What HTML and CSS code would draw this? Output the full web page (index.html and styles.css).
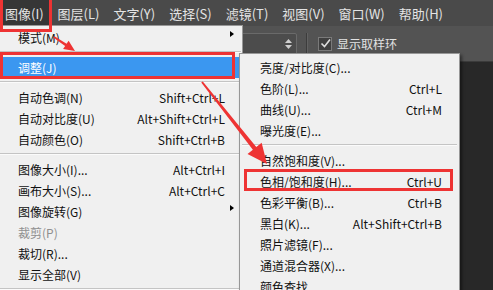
FILE: index.html
```html
<!DOCTYPE html>
<html lang="zh-CN">
<head>
<meta charset="utf-8">
<title>图像 - 调整</title>
<link rel="stylesheet" href="styles.css">
</head>
<body>
<div class="app">
  <nav class="menubar">
    <span class="mb-item active">图像(I)</span>
    <span class="mb-item">图层(L)</span>
    <span class="mb-item">文字(Y)</span>
    <span class="mb-item">选择(S)</span>
    <span class="mb-item">滤镜(T)</span>
    <span class="mb-item">视图(V)</span>
    <span class="mb-item">窗口(W)</span>
    <span class="mb-item">帮助(H)</span>
  </nav>
  <div class="options">
    <div class="select">
      <svg class="updown" width="7" height="10" viewBox="0 0 7 10"><path d="M3.5 0 L7 4 L0 4 Z M0 6 L7 6 L3.5 10 Z" fill="#cfcfcf"/></svg>
    </div>
    <div class="vsep"></div>
    <div class="check">
      <svg width="11" height="11" viewBox="0 0 11 11"><path d="M1.5 5.5 L4.5 8.5 L10 1.5" fill="none" stroke="#dedede" stroke-width="1.6"/></svg>
    </div>
    <span class="opt-label">显示取样环</span>
  </div>
  <div class="workspace"></div>

  <div class="menu main-menu">
    <div class="row">模式(M)<span class="arrow"></span></div>
    <div class="sep"></div>
    <div class="row hl boxed">调整(J)</div>
    <div class="sep"></div>
    <div class="row"><span>自动色调(N)</span><span>Shift+Ctrl+L</span></div>
    <div class="row"><span>自动对比度(U)</span><span>Alt+Shift+Ctrl+L</span></div>
    <div class="row"><span>自动颜色(O)</span><span>Shift+Ctrl+B</span></div>
    <div class="sep"></div>
    <div class="row"><span>图像大小(I)...</span><span>Alt+Ctrl+I</span></div>
    <div class="row"><span>画布大小(S)...</span><span>Alt+Ctrl+C</span></div>
    <div class="row">图像旋转(G)<span class="arrow"></span></div>
    <div class="row disabled">裁剪(P)</div>
    <div class="row">裁切(R)...</div>
    <div class="row">显示全部(V)</div>
    <div class="sep"></div>
  </div>

  <div class="menu sub-menu">
    <div class="row">亮度/对比度(C)...</div>
    <div class="row"><span>色阶(L)...</span><span>Ctrl+L</span></div>
    <div class="row"><span>曲线(U)...</span><span>Ctrl+M</span></div>
    <div class="row">曝光度(E)...</div>
    <div class="sep"></div>
    <div class="row">自然饱和度(V)...</div>
    <div class="row boxed2"><span>色相/饱和度(H)...</span><span>Ctrl+U</span></div>
    <div class="row"><span>色彩平衡(B)...</span><span>Ctrl+B</span></div>
    <div class="row"><span>黑白(K)...</span><span>Alt+Shift+Ctrl+B</span></div>
    <div class="row">照片滤镜(F)...</div>
    <div class="row">通道混合器(X)...</div>
    <div class="row">颜色查找...</div>
  </div>

  <svg class="annot" viewBox="0 0 493 290" width="493" height="290">
    <polygon fill="#ee3333" points="54.44,36.33 66.57,43.82 68.6,40.74 75,51 63.07,49.06 65.13,45.98 53.56,37.67"/>
    <polygon fill="#ee3333" points="202.78,81.38 256.3,146.96 261.64,142.73 267,164 247.52,153.91 252.86,149.69 201.22,82.62"/>
  </svg>
</div>
</body>
</html>
```

FILE: styles.css
```css
html, body {
  margin: 0;
  padding: 0;
}
body {
  width: 493px;
  height: 290px;
  overflow: hidden;
  background: #282828;
  font-family: "Noto Sans CJK SC", "Microsoft YaHei", sans-serif;
}
.app {
  position: relative;
  width: 493px;
  height: 290px;
  overflow: hidden;
  display: flex;
  flex-direction: column;
}

/* menu bar */
.menubar {
  height: 26px;
  flex: none;
  display: flex;
  background: #4a4a4a;
  color: #e4e4e4;
  font-size: 13px;
  line-height: 27px;
}
.mb-item {
  padding: 0 7px;
  white-space: nowrap;
}
.mb-item:first-child {
  padding-left: 5px;
}
.mb-item.active {
  position: relative;
  background: #363636;
}
.mb-item.active::after {
  content: "";
  position: absolute;
  left: 0;
  top: -3px;
  width: 52px;
  height: 35px;
  border: 3px solid #ee3333;
  box-sizing: border-box;
  z-index: 5;
}

/* options bar */
.options {
  height: 35px;
  flex: none;
  display: flex;
  align-items: center;
  background: #535353;
  border-bottom: 1px solid #3b3b3b;
}
.select {
  margin-left: 200px;
  width: 97px;
  height: 22px;
  box-sizing: border-box;
  border: 1px solid #6a6a6a;
  border-radius: 2px;
  background: #4c4c4c;
  display: flex;
  align-items: center;
  justify-content: flex-end;
  padding-right: 4px;
}
.vsep {
  margin-left: 9px;
  width: 1px;
  height: 22px;
  background: #3c3c3c;
  border-right: 1px solid #626262;
}
.check {
  margin-left: 10px;
  width: 14px;
  height: 14px;
  box-sizing: border-box;
  border: 1px solid #7a7a7a;
  background: #404040;
  display: flex;
  align-items: center;
  justify-content: center;
}
.opt-label {
  margin-left: 5px;
  color: #e2e2e2;
  font-size: 12px;
}
.workspace {
  flex: 1;
  background: #282828;
}

/* dropdown menus */
.menu {
  position: absolute;
  background: #f0f0f0;
  border: 1px solid #979797;
  box-sizing: border-box;
  font-size: 12px;
  color: #111;
}
.main-menu {
  left: -1px;
  top: 25px;
  width: 244px;
  height: 280px;
  padding-top: 1px;
}
.sub-menu {
  left: 239px;
  top: 53px;
  width: 221px;
  height: 250px;
  padding-top: 3px;
  box-shadow: 2px 2px 3px rgba(0, 0, 0, 0.45);
}
.row {
  position: relative;
  height: 21px;
  display: flex;
  align-items: center;
  justify-content: space-between;
  white-space: nowrap;
}
.main-menu .row {
  padding: 0 17px 0 18px;
}
.sub-menu .row {
  padding: 0 17px 0 20px;
}
.row.hl {
  background: #3b97f0;
  color: #fff;
}
.row.disabled {
  color: #8f8f8f;
}
.arrow {
  position: absolute;
  left: 230px;
  top: 4px;
  width: 0;
  height: 0;
  border-top: 3.5px solid transparent;
  border-bottom: 3.5px solid transparent;
  border-left: 4px solid #000;
}
.sep {
  height: 9px;
  box-sizing: border-box;
  padding-top: 3px;
}
.sep::before {
  content: "";
  display: block;
  height: 1px;
  background: #c4c4c4;
  border-bottom: 1px solid #fbfbfb;
}
.main-menu .sep::before {
  margin: 0 1px 0 0;
}
.sub-menu .sep::before {
  margin: 0 2px;
}
.boxed::after {
  content: "";
  position: absolute;
  left: 0;
  top: -5px;
  width: 235px;
  height: 27px;
  border: 3px solid #ee3333;
  box-sizing: border-box;
}
.boxed2::after {
  content: "";
  position: absolute;
  left: 4px;
  top: -2px;
  width: 209px;
  height: 22px;
  border: 3px solid #ee3333;
  box-sizing: border-box;
}

.annot {
  position: absolute;
  left: 0;
  top: 0;
  pointer-events: none;
}
```
